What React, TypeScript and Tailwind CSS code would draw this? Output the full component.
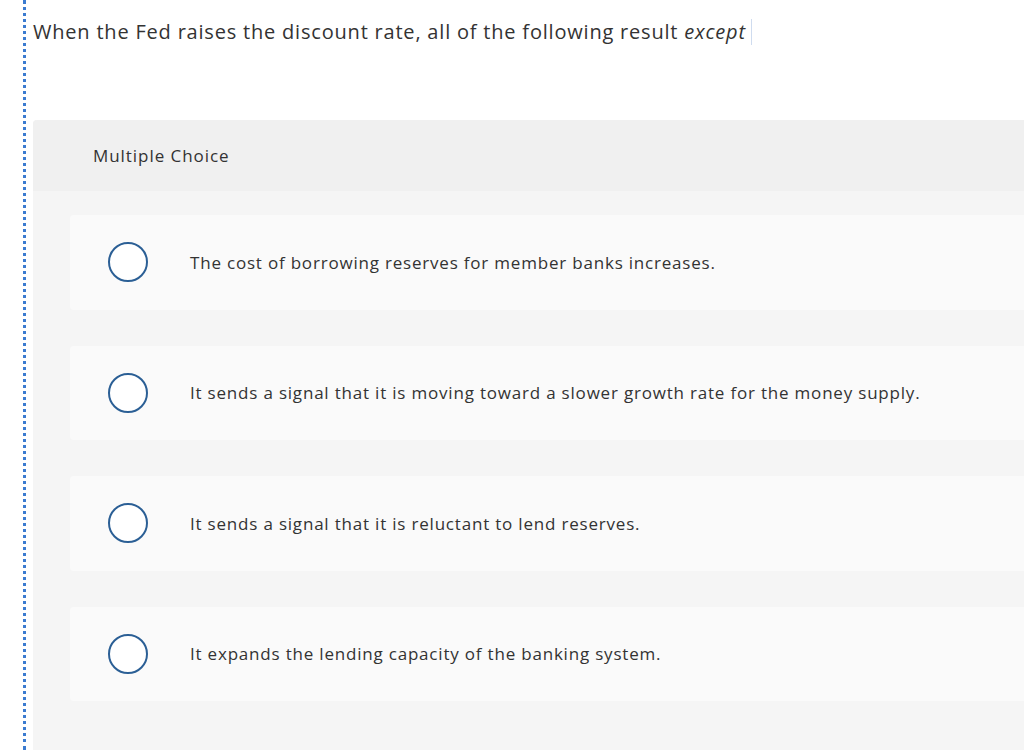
const options = [
  "The cost of borrowing reserves for member banks increases.",
  "It sends a signal that it is moving toward a slower growth rate for the money supply.",
  "It sends a signal that it is reluctant to lend reserves.",
  "It expands the lending capacity of the banking system.",
];

export default function App() {
  return (
    <div
      className="h-[750px] w-[1024px] overflow-hidden bg-white pl-[23px] text-[#333]"
      style={{ fontFamily: "'Open Sans', sans-serif" }}
    >
      <div className="flex h-full border-l-[3px] border-dotted border-[#3b7bd0]">
        <div className="flex-1 pl-[7px]">
          <div className="flex h-[64px] items-center text-[20px] tracking-[0.8px] text-[#333]">
            <span>
              When the Fed raises the discount rate, all of the following result <em>except</em>
            </span>
            <span className="ml-[5px] h-[26px] w-px bg-[#cfdcef]" />
          </div>

          <div className="mt-[56px] -mr-[40px] rounded-tl-[4px] bg-[#f5f5f5]">
            <div className="flex h-[71px] items-center rounded-tl-[4px] bg-[#f0f0f0] pl-[60px] text-[17px] tracking-[0.95px] text-[#333]">
              Multiple Choice
            </div>
            <div className="flex flex-col gap-[36px] pl-[37px] pt-[24px] pb-[60px]">
              {options.map((text, i) => (
                <div key={i} className="flex h-[94.5px] items-center rounded-[4px] bg-[#fafafa]">
                  <span className="ml-[38px] h-[40px] w-[40px] shrink-0 rounded-full border-2 border-[#2b5f95] bg-white" />
                  <span className="ml-[42px] text-[17px] tracking-[0.8px] text-[#333]">{text}</span>
                </div>
              ))}
            </div>
          </div>
        </div>
      </div>
    </div>
  );
}
